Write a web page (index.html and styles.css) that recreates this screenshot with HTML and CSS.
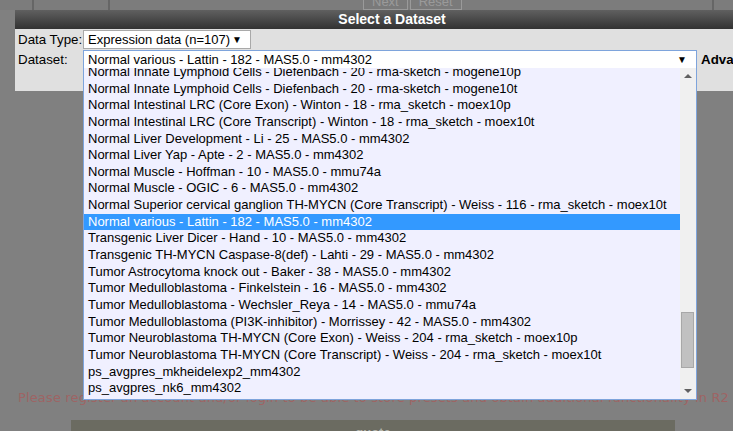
FILE: index.html
```html
<!DOCTYPE html>
<html>
<head>
<meta charset="utf-8">
<link rel="stylesheet" href="styles.css">
</head>
<body>
<div class="page">
  <div class="topstrip">
    <div class="cell c1"></div>
    <div class="cell c2"></div>
    <div class="cell c3">
      <span class="btn">Next</span><span class="btn">Reset</span>
    </div>
    <div class="cell c4"></div>
  </div>
  <div class="spacer"></div>
  <p class="msg">Please register an account and/or login to be able to store presets and obtain additional functionality in R2</p>
  <div class="quote">quote</div>
</div>

<div class="modal">
  <div class="titlebar">Select a Dataset</div>
  <div class="mbody">
    <div class="row">
      <span class="lbl">Data Type:</span>
      <div class="sel sel-type"><span class="val">Expression data (n=107)</span><span class="arrow">&#9660;</span></div>
    </div>
    <div class="row">
      <span class="lbl">Dataset:</span>
      <div class="sel sel-ds"><span class="val">Normal various - Lattin - 182 - MAS5.0 - mm4302</span><span class="arrow">&#9660;</span></div>
      <span class="adv">Advanced</span>
    </div>
  </div>
</div>

<div class="dropdown">
  <div class="opts">
    <div class="opt">Normal Innate Lymphoid Cells - Diefenbach - 20 - rma-sketch - mogene10p</div>
    <div class="opt">Normal Innate Lymphoid Cells - Diefenbach - 20 - rma-sketch - mogene10t</div>
    <div class="opt">Normal Intestinal LRC (Core Exon) - Winton - 18 - rma_sketch - moex10p</div>
    <div class="opt">Normal Intestinal LRC (Core Transcript) - Winton - 18 - rma_sketch - moex10t</div>
    <div class="opt">Normal Liver Development - Li - 25 - MAS5.0 - mm4302</div>
    <div class="opt">Normal Liver Yap - Apte - 2 - MAS5.0 - mm4302</div>
    <div class="opt">Normal Muscle - Hoffman - 10 - MAS5.0 - mmu74a</div>
    <div class="opt">Normal Muscle - OGIC - 6 - MAS5.0 - mm4302</div>
    <div class="opt">Normal Superior cervical ganglion TH-MYCN (Core Transcript) - Weiss - 116 - rma_sketch - moex10t</div>
    <div class="opt sel-opt">Normal various - Lattin - 182 - MAS5.0 - mm4302</div>
    <div class="opt">Transgenic Liver Dicer - Hand - 10 - MAS5.0 - mm4302</div>
    <div class="opt">Transgenic TH-MYCN Caspase-8(def) - Lahti - 29 - MAS5.0 - mm4302</div>
    <div class="opt">Tumor Astrocytoma knock out - Baker - 38 - MAS5.0 - mm4302</div>
    <div class="opt">Tumor Medulloblastoma - Finkelstein - 16 - MAS5.0 - mm4302</div>
    <div class="opt">Tumor Medulloblastoma - Wechsler_Reya - 14 - MAS5.0 - mmu74a</div>
    <div class="opt">Tumor Medulloblastoma (PI3K-inhibitor) - Morrissey - 42 - MAS5.0 - mm4302</div>
    <div class="opt">Tumor Neuroblastoma TH-MYCN (Core Exon) - Weiss - 204 - rma_sketch - moex10p</div>
    <div class="opt">Tumor Neuroblastoma TH-MYCN (Core Transcript) - Weiss - 204 - rma_sketch - moex10t</div>
    <div class="opt">ps_avgpres_mkheidelexp2_mm4302</div>
    <div class="opt">ps_avgpres_nk6_mm4302</div>
    <div class="opt">ps_avgpres_ptfla1_mm4302</div>
  </div>
  <div class="sbar">
    <div class="sarrow up"></div>
    <div class="strack"><div class="sthumb"></div></div>
    <div class="sarrow down"></div>
  </div>
</div>
</body>
</html>
```

FILE: styles.css
```css
html, body {
  margin: 0;
  padding: 0;
}
body {
  width: 733px;
  height: 431px;
  overflow: hidden;
  background: #808080;
  font-family: "Liberation Sans", Arial, sans-serif;
  position: relative;
}
.page {
  display: flex;
  flex-direction: column;
  height: 431px;
}
.topstrip {
  display: flex;
  flex: none;
  height: 10px;
  background: #7c7c7c;
}
.cell {
  border-right: 2px solid #666;
  box-sizing: border-box;
}
.c1 { width: 34px; }
.c2 { width: 76px; }
.c3 {
  width: 604px;
  display: flex;
  justify-content: flex-start;
  padding-left: 253px;
  gap: 2px;
  align-items: flex-end;
}
.c4 { flex: 1; border-right: none; }
.btn {
  height: 10px;
  box-sizing: border-box;
  border: 1px solid #9a9a9a;
  border-top: none;
  background: #7a7a7a;
  font-size: 13px;
  line-height: 4px;
  color: #9a9a9a;
  padding: 0 8px;
  overflow: hidden;
}
.spacer { flex: none; height: 381px; }
.msg {
  flex: none;
  margin: 0;
  height: 29px;
  font-family: "DejaVu Sans", sans-serif;
  font-size: 13px;
  line-height: 14px;
  letter-spacing: 0.14px;
  color: #9e6464;
  padding-left: 18px;
  white-space: nowrap;
}
.quote {
  flex: none;
  margin-left: 71px;
  width: 604px;
  height: 11px;
  overflow: hidden;
  background: #6b6b61;
  color: #b4b4ac;
  font-weight: bold;
  font-size: 13px;
  line-height: 15px;
  text-align: center;
  padding-top: 5px;
  box-sizing: border-box;
}

.modal {
  position: absolute;
  left: 15px;
  top: 10px;
  width: 754px;
  height: 81px;
  background: #e0e0e0;
}
.titlebar {
  height: 19px;
  background: linear-gradient(#606060, #323232);
  color: #fff;
  font-weight: bold;
  font-size: 14px;
  line-height: 19px;
  text-align: center;
}
.mbody {
  padding: 1px 0 0 3px;
  display: flex;
  flex-direction: column;
  gap: 1px;
}
.row {
  display: flex;
  align-items: center;
  height: 19px;
}
.lbl {
  width: 65px;
  font-size: 13.33px;
  color: #000;
}
.sel {
  display: flex;
  align-items: center;
  height: 19px;
  box-sizing: border-box;
  background: #fff;
  border: 1px solid #a9a9a9;
  font-size: 13px;
  padding: 0 0 0 4px;
}
.sel-type { width: 168px; }
.sel-ds {
  width: 614px;
  height: 20px;
  border-color: #7ea4dc;
}
.val { flex: 1; white-space: nowrap; }
.arrow {
  font-size: 10px;
  width: 19px;
  text-align: left;
  padding-left: 2px;
}
.adv {
  margin-left: 4px;
  font-weight: bold;
  font-size: 13.33px;
}

.dropdown {
  position: absolute;
  left: 83px;
  top: 68px;
  width: 614px;
  height: 332px;
  box-sizing: border-box;
  border: 1px solid #7ea4dc;
  border-top: none;
  background: #f0f0ff;
  display: flex;
  overflow: hidden;
}
.opts {
  flex: 1;
  margin-top: -4px;
}
.opt {
  height: 16.65px;
  line-height: 16.65px;
  font-size: 13px;
  padding-left: 4px;
  white-space: nowrap;
  color: #000;
}
.sel-opt {
  background: #3399ff;
  color: #fff;
}
.sbar {
  width: 16px;
  background: #f0f0f0;
  display: flex;
  flex-direction: column;
}
.sarrow {
  height: 16px;
  display: flex;
  align-items: center;
  justify-content: center;
}
.sarrow::before {
  content: "";
  border-left: 4px solid transparent;
  border-right: 4px solid transparent;
}
.up::before { border-bottom: 4px solid #606060; }
.down::before { border-top: 4px solid #606060; }
.strack {
  flex: 1;
  padding-top: 228px;
  padding-left: 1px;
}
.sthumb {
  width: 13px;
  height: 56px;
  box-sizing: border-box;
  background: #c1c1c1;
  border: 1px solid #a8a8a8;
}
```
